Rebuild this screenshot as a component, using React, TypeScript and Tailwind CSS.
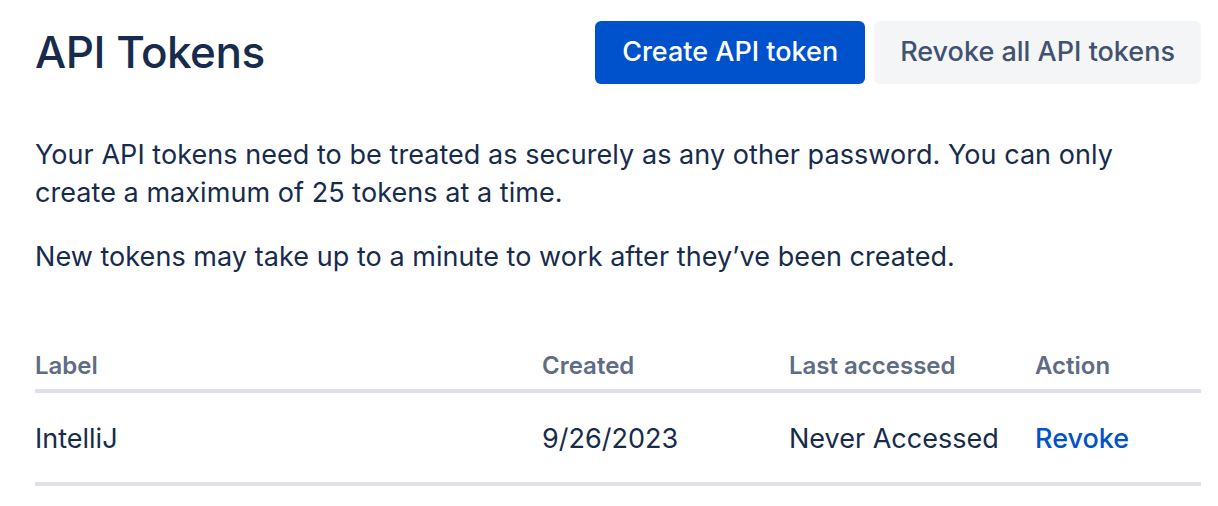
const tokens = [
  { label: "IntelliJ", created: "9/26/2023", lastAccessed: "Never Accessed" },
];

export default function App() {
  return (
    <div
      className="min-h-screen bg-white pl-[35px] pr-[17px] pt-[20px] text-[#172B4D]"
      style={{ fontFamily: 'Inter, "Noto Sans", sans-serif' }}
    >
      <header className="flex items-center justify-between">
        <h1 className="text-[44px] font-medium leading-[64px] tracking-[-0.5px]">API Tokens</h1>
        <div className="flex gap-[9px]">
          <button className="h-[63px] rounded-[6px] bg-[#0052CC] px-[27px] text-[27px] font-medium text-white">
            Create API token
          </button>
          <button className="h-[63px] rounded-[6px] bg-[#F4F5F7] px-[26px] text-[27px] font-medium text-[#42526E]">
            Revoke all API tokens
          </button>
        </div>
      </header>

      <div className="mt-[52px] text-[27px] leading-[38px] tracking-[0.05px]">
        <p className="max-w-[1120px]">
          Your API tokens need to be treated as securely as any other password. You can only create a
          maximum of 25 tokens at a time.
        </p>
        <p className="mt-[26px]">New tokens may take up to a minute to work after they’ve been created.</p>
      </div>

      <table className="mt-[72px] w-full border-collapse text-left">
        <thead>
          <tr className="border-b-[4px] border-[#DFE1E6] text-[24px] font-semibold text-[#5E6C84]">
            <th className="w-[507px] pb-[5px] font-semibold">Label</th>
            <th className="w-[247px] pb-[5px] font-semibold">Created</th>
            <th className="w-[246px] pb-[5px] font-semibold">Last accessed</th>
            <th className="pb-[5px] font-semibold">Action</th>
          </tr>
        </thead>
        <tbody>
          {tokens.map((t) => (
            <tr key={t.label} className="border-b-[4px] border-[#DFE1E6] text-[27px]">
              <td className="pb-[22px] pt-[26px]">{t.label}</td>
              <td className="pb-[22px] pt-[26px]">{t.created}</td>
              <td className="pb-[22px] pt-[26px]">{t.lastAccessed}</td>
              <td className="pb-[22px] pt-[26px]">
                <a className="font-medium text-[#0052CC]">Revoke</a>
              </td>
            </tr>
          ))}
        </tbody>
      </table>
    </div>
  );
}
